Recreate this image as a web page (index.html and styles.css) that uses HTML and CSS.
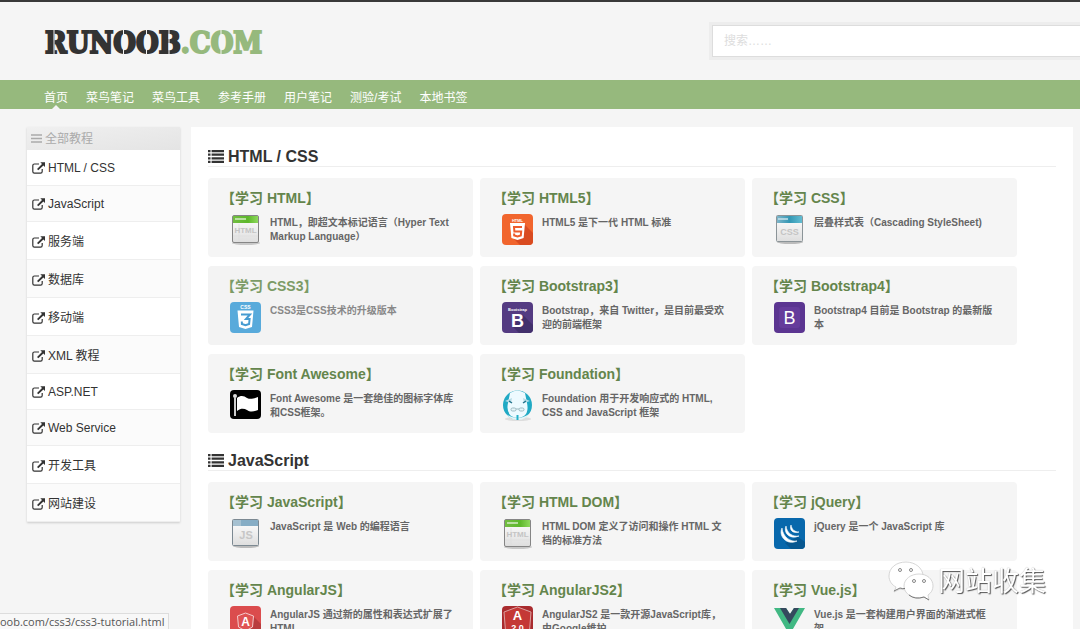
FILE: index.html
```html
<!DOCTYPE html>
<html lang="zh-CN">
<head>
<meta charset="utf-8">
<meta name="viewport" content="width=device-width">
<title>菜鸟教程</title>
<link rel="stylesheet" href="styles.css">
</head>
<body>
<svg class="sprite" aria-hidden="true">
  <defs>
    <linearGradient id="paper" x1="0" y1="0" x2="0" y2="1"><stop offset="0" stop-color="#fff"/><stop offset="1" stop-color="#dedede"/></linearGradient>
    <linearGradient id="green"><stop stop-color="#72bd42"/><stop offset=".6" stop-color="#5db82b"/><stop offset="1" stop-color="#8ed95d"/></linearGradient>
    <linearGradient id="teal"><stop stop-color="#7eb5c9"/><stop offset=".5" stop-color="#3397b4"/><stop offset="1" stop-color="#62bdd2"/></linearGradient>
  </defs>
  <symbol id="ext" viewBox="0 0 14 12"><path d="M10.2 7v2.6q0 1.6-1.6 1.6H2.4Q.8 11.200.8 9.600V3.600Q.8 2 2.400 2H7" fill="none" stroke="currentColor" stroke-width="1.200"/><path d="M8.300.2H13V5L11.400 3.400 6.300 8.300 5 7 10 1.900z" fill="currentColor"/></symbol>
  <symbol id="list" viewBox="0 0 16 13"><path d="M0 0h2.500v2.200H0zM0 3.600h2.500v2.200H0zM0 7.200h2.500v2.200H0zM0 10.800h2.500V13H0zM3.600 0H16v2.200H3.600zM3.600 3.600H16v2.200H3.600zM3.600 7.200H16v2.200H3.600zM3.600 10.800H16V13H3.600z" fill="currentColor"/></symbol>
  <symbol id="page-html" viewBox="0 0 32 32"><ellipse cx="16" cy="29" rx="14" ry="2" fill="#c8c8c8"/><rect x="2.500" y="1.500" width="26" height="27" rx="1.500" fill="url(#paper)" stroke="#858585"/><path d="M3 2h25v7H3z" fill="url(#green)"/><path d="M5 5h11" stroke="#d5edc6" stroke-width="1.500"/><path d="M9 10v18M3 22h25" stroke="#ddd" stroke-width=".7"/></symbol>
  <symbol id="page-css" viewBox="0 0 32 32"><ellipse cx="16" cy="28" rx="13" ry="2" fill="#bbb"/><rect x="2.500" y="1.500" width="26" height="26" rx="1" fill="url(#paper)" stroke="#8b9498"/><path d="M3 2h25v7H3z" fill="url(#teal)"/><path d="M4 5h10" stroke="#c7e2eb" stroke-width="1.500"/></symbol>
  <symbol id="page-js" viewBox="0 0 32 32"><ellipse cx="16" cy="28" rx="13" ry="2" fill="#bbb"/><rect x="2.500" y="1.500" width="26" height="26" rx="1" fill="url(#paper)" stroke="#7c8992"/><path d="M3 2h25v6H3z" fill="#86adc5"/><path d="M3 2h8v6H3z" fill="#a6c1d1"/></symbol>
</svg>

<header class="header">
  <a class="brand" href="#" aria-label="RUNOOB.COM">
    <svg class="logo" viewBox="0 0 222 32">
      <text x="2" y="28" class="logo-text">RUNOOB<tspan class="logo-com">.COM</tspan></text>
      <path d="M80.500 2v28M103.500 2v28M178 2v28M11 2v28M126 2v28" class="logo-cut"/>
    </svg>
  </a>
  <form class="search"><input class="search-input" type="search" aria-label="搜索" placeholder="搜索……"></form>
</header>

<nav class="nav">
  <a class="current" href="#">首页</a><a href="#">菜鸟笔记</a><a href="#">菜鸟工具</a><a href="#">参考手册</a><a href="#">用户笔记</a><a href="#">测验/考试</a><a href="#">本地书签</a>
</nav>

<div class="layout">
  <aside class="sidebar">
    <h2 class="side-title"><svg class="bars" viewBox="0 0 11 9"><path d="M0 1h11M0 4.500h11M0 8h11" stroke="currentColor" stroke-width="1.500"/></svg>全部教程</h2>
    <a class="side-link" href="#"><svg><use href="#ext"/></svg>HTML / CSS</a>
    <a class="side-link" href="#"><svg><use href="#ext"/></svg>JavaScript</a>
    <a class="side-link tall" href="#"><svg><use href="#ext"/></svg>服务端</a>
    <a class="side-link tall" href="#"><svg><use href="#ext"/></svg>数据库</a>
    <a class="side-link tall" href="#"><svg><use href="#ext"/></svg>移动端</a>
    <a class="side-link tall" href="#"><svg><use href="#ext"/></svg>XML 教程</a>
    <a class="side-link" href="#"><svg><use href="#ext"/></svg>ASP.NET</a>
    <a class="side-link" href="#"><svg><use href="#ext"/></svg>Web Service</a>
    <a class="side-link tall" href="#"><svg><use href="#ext"/></svg>开发工具</a>
    <a class="side-link tall" href="#"><svg><use href="#ext"/></svg>网站建设</a>
  </aside>

  <main class="content">
    <section class="group">
      <h2 class="group-title"><svg><use href="#list"/></svg>HTML / CSS</h2>
      <div class="cards">
        <a class="card" href="#"><h3>【学习 HTML】</h3><div class="info"><svg class="icon" viewBox="0 0 32 32"><use href="#page-html"/><text x="15.500" y="19" text-anchor="middle" class="art-text" font-size="8" fill="#c4c4c4">HTML</text></svg><p>HTML，即超文本标记语言（Hyper Text<br>Markup Language）</p></div></a>
        <a class="card" href="#"><h3>【学习 HTML5】</h3><div class="info"><svg class="icon" viewBox="0 0 32 32"><rect width="31" height="31" rx="4" fill="#f1652d"/><path d="M23 11l8 8v8q0 4-4 4h-9l-6-6z" fill="#d94b20"/><text x="15.500" y="8" text-anchor="middle" class="art-text" font-size="4" fill="#fff">HTML</text><path d="M8 9h15l-1.400 15L15.500 26 9.400 24z" fill="#fff"/><path d="M20 13h-8l.4 4.500h6.800l-.4 4-3.300 1-3.300-1-.1-2" fill="none" stroke="#ee5b2b" stroke-width="2"/></svg><p>HTML5 是下一代 HTML 标准</p></div></a>
        <a class="card" href="#"><h3>【学习 CSS】</h3><div class="info"><svg class="icon" viewBox="0 0 32 32"><use href="#page-css"/><text x="15.500" y="21" text-anchor="middle" class="art-text" font-size="9" fill="#c4c4c4">CSS</text></svg><p>层叠样式表（Cascading StyleSheet)</p></div></a>
        <a class="card hover" href="#"><h3>【学习 CSS3】</h3><div class="info"><svg class="icon" viewBox="0 0 32 32"><rect width="31" height="31" rx="4" fill="#58aadb"/><text x="15.500" y="7" text-anchor="middle" class="art-text" font-size="5" fill="#fff">CSS</text><path d="M7.500 8.500h16L22 25l-6.500 2L9 25z" fill="#fff"/><path d="M11 12.500h9l-4 4.500h3.600l-.5 5-3.600 1.200-3.600-1.200-.1-2.500" fill="none" stroke="#459bd1" stroke-width="2"/></svg><p>CSS3是CSS技术的升级版本</p></div></a>
        <a class="card" href="#"><h3>【学习 Bootstrap3】</h3><div class="info"><svg class="icon" viewBox="0 0 32 32"><rect width="31" height="31" rx="4" fill="#543b82"/><path d="M21 13l10 10v4q0 4-4 4h-10l-7-7z" fill="#42306c"/><text x="15.500" y="9" text-anchor="middle" class="art-text" font-size="4" fill="#fff">Bootstrap</text><text x="15.500" y="25" text-anchor="middle" class="art-text" font-size="18" fill="#fff">B</text></svg><p>Bootstrap，来自 Twitter，是目前最受欢<br>迎的前端框架</p></div></a>
        <a class="card" href="#"><h3>【学习 Bootstrap4】</h3><div class="info"><svg class="icon" viewBox="0 0 32 32"><rect width="31" height="31" rx="4" fill="#5b3591"/><rect x="5" y="5" width="21" height="21" rx="3" fill="#653c9b"/><text x="15.500" y="22" text-anchor="middle" class="art-text light" font-size="18" fill="#fff">B</text></svg><p>Bootstrap4 目前是 Bootstrap 的最新版<br>本</p></div></a>
        <a class="card" href="#"><h3>【学习 Font Awesome】</h3><div class="info"><svg class="icon" viewBox="0 0 32 32"><rect width="31" height="29" rx="4" fill="#000"/><circle cx="5" cy="6" r="2" fill="#ddd"/><path d="M4 7h2v19H4z" fill="#ccc"/><path d="M7 8c4-3 7-2 10 0 3 1.500 6 1 11-1v13c-5 2-8 2-11 0-3-1.500-6-2-10 1z" fill="#fff"/></svg><p>Font Awesome 是一套绝佳的图标字体库<br>和CSS框架。</p></div></a>
        <a class="card" href="#"><h3>【学习 Foundation】</h3><div class="info"><svg class="icon" viewBox="0 0 32 32"><ellipse cx="16" cy="29" rx="13" ry="2" fill="#ddd"/><circle cx="15.500" cy="15" r="14.500" fill="#20a9c4"/><path d="M8 3Q15-2 23 3l2 10q2 9-3 13-6 4-13 0-5-5-3-13z" fill="#edfaff"/><path d="M3 11l7-3-1 5zM28 11l-7-3 1 5z" fill="#b6dce7"/><path d="M7 11l3 2M24 11l-3 2" stroke="#25748c" stroke-width="1.500"/><g fill="#e5f5f9" stroke="#9cb9c1"><rect x="9" y="18" width="5" height="3" rx="1.500"/><rect x="17" y="18" width="5" height="3" rx="1.500"/><path d="M14 19h3"/></g><path d="M4 24q11 8 23 0-4 6-11 6T4 24" fill="#e6f5f7"/><path d="M15.500 25v5" stroke="#25b0c8" stroke-width="2"/></svg><p>Foundation 用于开发响应式的 HTML,<br>CSS and JavaScript 框架</p></div></a>
      </div>
    </section>

    <section class="group">
      <h2 class="group-title"><svg><use href="#list"/></svg>JavaScript</h2>
      <div class="cards">
        <a class="card" href="#"><h3>【学习 JavaScript】</h3><div class="info"><svg class="icon" viewBox="0 0 32 32"><use href="#page-js"/><text x="16" y="21" text-anchor="middle" class="art-text" font-size="11" fill="#c6c6c6">JS</text></svg><p>JavaScript 是 Web 的编程语言</p></div></a>
        <a class="card" href="#"><h3>【学习 HTML DOM】</h3><div class="info"><svg class="icon" viewBox="0 0 32 32"><use href="#page-html"/><text x="15.500" y="19" text-anchor="middle" class="art-text" font-size="8" fill="#c4c4c4">HTML</text></svg><p>HTML DOM 定义了访问和操作 HTML 文<br>档的标准方法</p></div></a>
        <a class="card" href="#"><h3>【学习 jQuery】</h3><div class="info"><svg class="icon" viewBox="0 0 32 32"><rect width="31" height="31" rx="4" fill="#0868ac"/><path d="M24 19l7 5v3q0 4-4 4H17l-6-6z" fill="#075790"/><path d="M8 10c-4 8 5 18 15 13-7 1-14-4-15-13M12 8c-3 7 4 14 13 10-7 1-12-3-13-10M17 7c-2 5 2 9 8 7-4 0-7-2-8-7" fill="#fff" stroke="#fff" stroke-width=".6"/></svg><p>jQuery 是一个 JavaScript 库</p></div></a>
        <a class="card" href="#"><h3>【学习 AngularJS】</h3><div class="info"><svg class="icon" viewBox="0 0 32 32"><rect width="31" height="31" rx="4" fill="#db4c4d"/><path d="M23 10l8 8v13H20l-8-7z" fill="#b93c3e"/><path d="M15.500 7l8 3-1 11-7 4-7-4-1-11z" fill="#df5353" stroke="#f4cccc"/><text x="15.500" y="20" text-anchor="middle" class="art-text" font-size="12" fill="#fff">A</text></svg><p>AngularJS 通过新的属性和表达式扩展了<br>HTML</p></div></a>
        <a class="card" href="#"><h3>【学习 AngularJS2】</h3><div class="info"><svg class="icon" viewBox="0 0 32 32"><rect width="31" height="31" rx="4" fill="#a92b2e"/><path d="M15.500 1L29 6l-2 25H4L2 6z" fill="#c43835" stroke="#dba1a0"/><text x="15.500" y="14" text-anchor="middle" class="art-text" font-size="13" fill="#fff">A</text><text x="15.500" y="25" text-anchor="middle" class="art-text" font-size="9" fill="#fff">2.0</text></svg><p>AngularJS2 是一款开源JavaScript库，<br>由Google维护</p></div></a>
        <a class="card" href="#"><h3>【学习 Vue.js】</h3><div class="info"><svg class="icon" viewBox="0 0 32 32"><path d="M0 2h12l4 6 4-6h11L15.500 29z" fill="#41b883"/><path d="M6 2h6l4 6 4-6h5l-9.500 16z" fill="#35495e"/></svg><p>Vue.js 是一套构建用户界面的渐进式框<br>架</p></div></a>
      </div>
    </section>
  </main>
</div>

<div class="status">oob.com/css3/css3-tutorial.html</div>
<div class="watermark">
  <svg viewBox="0 0 46 42"><g fill="#fff" stroke="#ccc" stroke-width=".8"><path d="M18 1C8 1 1 7 1 15c0 5 3 9 7 11l-2 5 6-3c11 3 23-2 23-13C35 7 27 1 18 1z"/><path d="M31 13c-8 0-15 5-15 12 0 9 11 14 20 11l5 3-1-5c3-2 5-5 5-9 0-7-6-12-14-12z"/></g><path d="M6 30l6-3q3 1 5 .5M21 34q6 5 15 2l5 3" fill="none" stroke="#777"/><g fill="#fff" stroke="#888"><circle cx="12" cy="9" r="1.500"/><circle cx="23" cy="9" r="1.500"/><circle cx="26" cy="20" r="1.500"/><circle cx="36" cy="20" r="1.500"/></g></svg>
  <span>网站收集</span>
</div>
</body>
</html>
```

FILE: styles.css
```css
* { box-sizing: border-box; }
html { scrollbar-width: none; }
body {
  margin: 0;
  border-top: 2px solid #393939;
  background: #f5f5f5;
  color: #333;
  font: 12px/18px "Liberation Sans", "Noto Sans CJK SC", sans-serif;
}
a { color: inherit; text-decoration: none; }
h2, h3, p { margin: 0; }
svg { display: block; flex: none; }
.sprite { position: absolute; width: 0; height: 0; }

.header {
  display: flex;
  justify-content: space-between;
  align-items: center;
  height: 78px;
  padding-left: 43px;
}
.logo { width: 222px; height: 32px; overflow: visible; }
.logo-text {
  font: bold 29px "DejaVu Serif Condensed", "DejaVu Serif", serif;
  fill: #333;
  stroke: #333;
  stroke-width: 2px;
}
.logo-com { fill: #96b97d; stroke: #96b97d; }
.logo-cut { stroke: #f5f5f5; stroke-width: 1px; }
.search { width: 35.5%; }
.search-input {
  display: block;
  width: 100%;
  height: 32px;
  padding: 0 11px;
  border: 1px solid #ddd;
  border-right: 0;
  border-radius: 0;
  background: #fff;
  box-shadow: 0 0 0 3px #ededed;
  font: inherit;
  outline: 0;
}
.search-input::placeholder { color: #ddd; opacity: 1; }

.nav {
  display: flex;
  gap: 18px;
  height: 29px;
  padding: 0 44px;
  background: #96b97d;
  color: #fff;
  line-height: 36px;
}
.current { position: relative; height: 29px; }
.current::after {
  content: "";
  position: absolute;
  left: 8px;
  bottom: 0;
  border: 4px solid transparent;
  border-top: 0;
  border-bottom-color: #f5f5f5;
}

.layout {
  display: flex;
  align-items: flex-start;
  gap: 11px;
  padding: 18px 7px 0 27px;
}
.sidebar {
  width: 153px;
  flex: none;
  background: #fff;
  box-shadow: 0 1px 2px #ccc;
}
.side-title {
  display: flex;
  align-items: center;
  gap: 3px;
  height: 23px;
  padding-left: 4px;
  background: linear-gradient(to right bottom, #f0f0f0, #e4e4e4);
  color: #aaa;
  font-size: 12px;
  font-weight: normal;
}
.bars { width: 11px; height: 9px; }
.side-link {
  display: flex;
  align-items: center;
  gap: 2px;
  padding: 9px 5px 8px;
  border-bottom: 1px solid #eee;
}
.side-link:nth-of-type(even) { background: #fbfbfb; }
.side-link svg { width: 14px; height: 12px; }
.side-link.tall { padding: 11px 5px 8px; }

.content {
  flex: 1;
  min-width: 0;
  padding: 20px 17px;
  background: #fff;
}
.group { margin-bottom: 18px; }
.group-title {
  display: flex;
  align-items: center;
  gap: 4px;
  margin-bottom: 11px;
  border-bottom: 1px solid #eee;
  font-size: 16px;
  line-height: 19px;
}
.group-title svg { width: 16px; height: 13px; }
.cards {
  display: grid;
  grid-template-columns: repeat(3, 1fr);
  gap: 9px 7px;
  padding-right: 39px;
}
.card {
  height: 79px;
  padding: 10px 13px;
  border-radius: 4px;
  background: #f5f5f5;
}
.card h3 {
  color: #64854c;
  font-size: 14px;
  line-height: 20px;
  white-space: nowrap;
}
.info {
  display: flex;
  gap: 8px;
  padding: 6px 0 0 9px;
}
.icon { width: 32px; height: 32px; }
.info p {
  color: #666;
  font-size: 10px;
  font-weight: bold;
  line-height: 14px;
  white-space: nowrap;
  margin-top: 2px;
}
.card.hover { background: #f3f3f3; }
.hover h3 { color: #7c9b66; }
.hover p { color: #888; }
.art-text { font-family: "Liberation Sans", sans-serif; font-weight: bold; }
.light { font-weight: normal; }

.status {
  position: fixed;
  left: 0;
  bottom: 0;
  padding-right: 3px;
  border: 1px solid #ddd;
  border-width: 1px 1px 0 0;
  background: #f8f8f8;
  color: #555;
  font: 11px/15px "Open Sans", sans-serif;
}
.watermark {
  position: fixed;
  right: 34px;
  bottom: 26px;
  display: flex;
  align-items: center;
  gap: 4px;
  color: #fff;
  font-size: 27px;
  line-height: 40px;
  text-shadow: 1px 1px 1px #555, 0 0 1px #aaa;
}
.watermark svg { width: 46px; height: 42px; }
```
